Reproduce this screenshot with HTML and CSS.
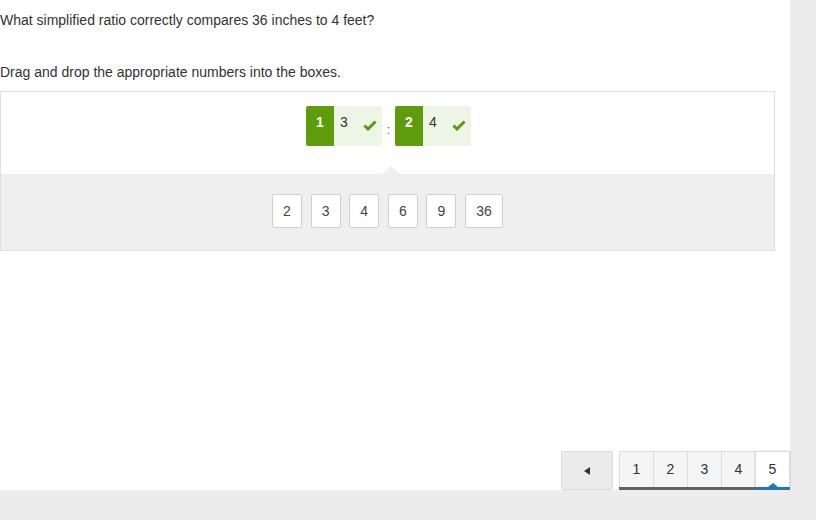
FILE: index.html
```html
<!DOCTYPE html>
<html>
<head>
<meta charset="utf-8">
<link rel="stylesheet" href="styles.css">
</head>
<body>
<div class="page">
  <p class="q q1">What simplified ratio correctly compares 36 inches to 4 feet?</p>
  <p class="q q2">Drag and drop the appropriate numbers into the boxes.</p>
  <div class="panel">
    <div class="drops">
      <div class="drop">
        <span class="idx">1</span>
        <span class="val">3</span>
        <svg class="check" width="14" height="11" viewBox="0 0 14 11"><path d="M1.5 5.5 L5 9 L12.5 1.5" fill="none" stroke="#5a9a0c" stroke-width="3"/></svg>
      </div>
      <span class="colon">:</span>
      <div class="drop">
        <span class="idx">2</span>
        <span class="val">4</span>
        <svg class="check" width="14" height="11" viewBox="0 0 14 11"><path d="M1.5 5.5 L5 9 L12.5 1.5" fill="none" stroke="#5a9a0c" stroke-width="3"/></svg>
      </div>
    </div>
    <div class="tray">
      <span class="notch"></span>
      <span class="tile">2</span>
      <span class="tile">3</span>
      <span class="tile">4</span>
      <span class="tile">6</span>
      <span class="tile">9</span>
      <span class="tile wide">36</span>
    </div>
  </div>
  <div class="pager">
    <button class="prev"><svg width="6" height="8" viewBox="0 0 6 8"><path d="M6 0 L0 4 L6 8 Z" fill="#333"/></svg></button>
    <div class="pages">
      <span class="pg">1</span>
      <span class="pg">2</span>
      <span class="pg">3</span>
      <span class="pg">4</span>
      <span class="pg active">5</span>
    </div>
  </div>
</div>
</body>
</html>
```
FILE: styles.css
```css
html, body {
  margin: 0;
  padding: 0;
  background: #ececec;
}
body {
  font-family: "Liberation Sans", Arial, sans-serif;
  font-size: 14px;
  color: #333;
}
.page {
  width: 790px;
  height: 490px;
  background: #fff;
  display: flex;
  flex-direction: column;
}
.q {
  margin: 0;
  line-height: 20px;
}
.q1 {
  margin-top: 10px;
}
.q2 {
  margin-top: 32px;
}
.panel {
  margin-top: 9px;
  width: 773px;
  border: 1px solid #e0e0e0;
}
.drops {
  height: 82px;
  box-sizing: border-box;
  padding-top: 14px;
  padding-left: 2px;
  display: flex;
  justify-content: center;
  align-items: flex-start;
}
.drop {
  width: 76px;
  height: 40px;
  background: #edf5e6;
  border-radius: 2px;
  display: flex;
  align-items: flex-start;
  position: relative;
}
.idx {
  width: 28px;
  height: 40px;
  background: #5e9c0b;
  color: #fff;
  font-weight: bold;
  text-align: center;
  line-height: 14px;
  padding-top: 9px;
  box-sizing: border-box;
  border-radius: 2px 0 0 2px;
}
.val {
  padding-left: 6px;
  line-height: 14px;
  padding-top: 9px;
}
.check {
  position: absolute;
  left: 57px;
  top: 14px;
}
.colon {
  width: 13px;
  text-align: center;
  color: #666;
  font-size: 12px;
  margin-top: 17px;
}
.tray {
  position: relative;
  background: #efefef;
  height: 76px;
  box-sizing: border-box;
  padding-top: 20px;
  display: flex;
  justify-content: center;
  align-items: flex-start;
  gap: 8.6px;
}
.notch {
  position: absolute;
  top: -8px;
  left: 381px;
  width: 0;
  height: 0;
  border-left: 9px solid transparent;
  border-right: 9px solid transparent;
  border-bottom: 8px solid #efefef;
}
.tile {
  width: 30px;
  height: 34px;
  box-sizing: border-box;
  background: #fff;
  border: 1px solid #cfcfcf;
  border-radius: 2px;
  text-align: center;
  line-height: 32px;
  color: #444;
}
.tile.wide {
  width: 38px;
}
.pager {
  margin-top: auto;
  display: flex;
  justify-content: flex-end;
  align-items: flex-end;
  gap: 6px;
}
.prev {
  width: 52px;
  height: 39px;
  box-sizing: border-box;
  background: #ebebeb;
  border: 1px solid #d9d9d9;
  border-radius: 2px;
  padding: 0;
  display: flex;
  align-items: center;
  justify-content: center;
}
.pages {
  display: flex;
  border-bottom: 3px solid #636363;
  height: 39px;
  box-sizing: border-box;
}
.pg {
  width: 34px;
  box-sizing: border-box;
  background: #f5f5f5;
  border: 1px solid #dcdcdc;
  border-bottom: none;
  border-right: none;
  text-align: center;
  line-height: 35px;
  color: #333;
}
.pg.active {
  width: 35px;
  background: #fff;
  border-right: 1px solid #dcdcdc;
  box-shadow: 0 0 2px rgba(0,0,0,0.2);
  position: relative;
}
.pg.active::after {
  content: "";
  position: absolute;
  left: -1px;
  right: -1px;
  bottom: -3px;
  height: 3px;
  background: #1f77b4;
}
.pg.active::before {
  content: "";
  position: absolute;
  left: 12px;
  bottom: 0;
  border-left: 5px solid transparent;
  border-right: 5px solid transparent;
  border-bottom: 4px solid #1f77b4;
}
```
